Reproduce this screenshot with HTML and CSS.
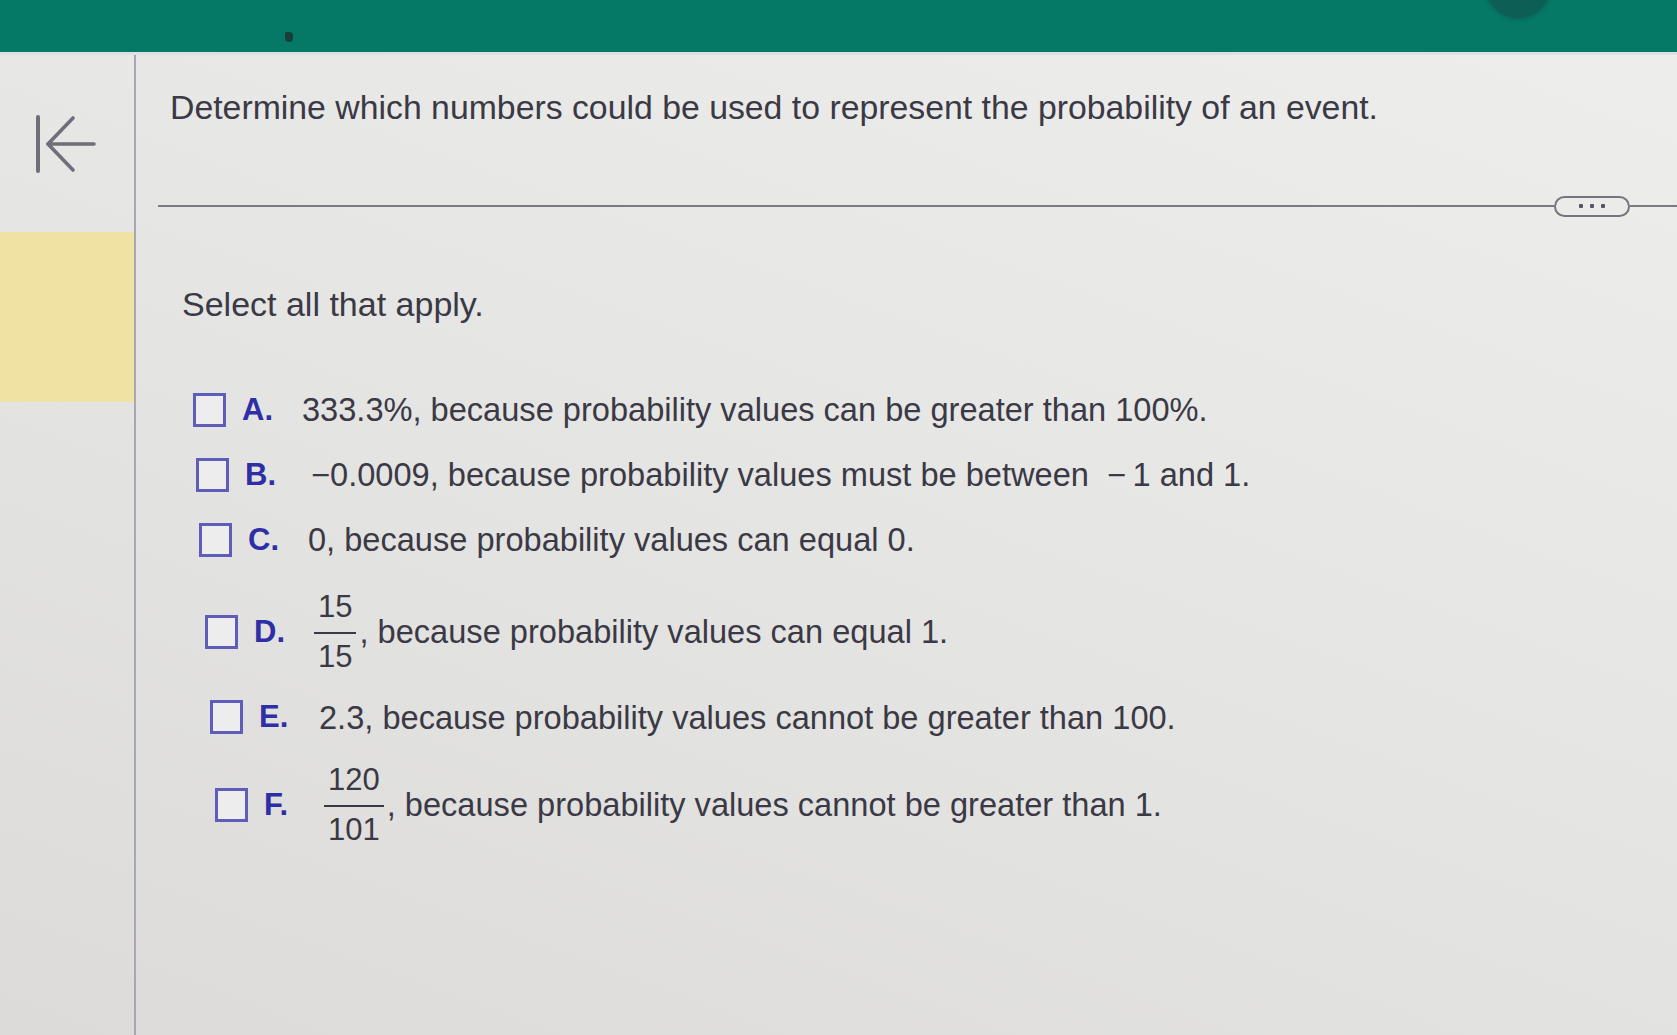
FILE: index.html
```html
<!DOCTYPE html>
<html lang="en">
<head>
<meta charset="utf-8">
<title>Probability question</title>
<link rel="stylesheet" href="styles.css">
</head>
<body>
<header class="topbar">
  <span class="avatar"></span>
  <span class="speck"></span>
</header>
<div class="layout">
  <aside class="sidebar">
    <button class="back" aria-label="Back">
      <svg width="62" height="60" viewBox="0 0 62 60">
        <line x1="3" y1="2" x2="3" y2="56" stroke="#6f6e79" stroke-width="4" stroke-linecap="round"/>
        <line x1="13" y1="29" x2="59" y2="29" stroke="#6f6e79" stroke-width="3.6" stroke-linecap="round"/>
        <polyline points="38,3 13,29 38,55" fill="none" stroke="#6f6e79" stroke-width="3.6" stroke-linecap="round" stroke-linejoin="round"/>
      </svg>
    </button>
    <div class="flag"></div>
  </aside>
  <main class="content">
    <h1 class="question">Determine which numbers could be used to represent the probability of an event.</h1>
    <div class="divider">
      <span class="line"></span>
      <span class="more"><i></i><i></i><i></i></span>
      <span class="line tail"></span>
    </div>
    <p class="instruction">Select all that apply.</p>
    <ul class="options">
      <li class="option"><span class="box"></span><span class="letter">A.</span><span class="text">333.3%, because probability values can be greater than 100%.</span></li>
      <li class="option"><span class="box"></span><span class="letter">B.</span><span class="text neg">−0.0009, because probability values must be between &nbsp;−&#8201;1 and 1.</span></li>
      <li class="option"><span class="box"></span><span class="letter">C.</span><span class="text">0, because probability values can equal 0.</span></li>
      <li class="option"><span class="box"></span><span class="letter">D.</span><span class="frac"><span class="num">15</span><span class="den">15</span></span><span class="text">, because probability values can equal 1.</span></li>
      <li class="option"><span class="box"></span><span class="letter">E.</span><span class="text">2.3, because probability values cannot be greater than 100.</span></li>
      <li class="option"><span class="box"></span><span class="letter">F.</span><span class="frac"><span class="num">120</span><span class="den">101</span></span><span class="text">, because probability values cannot be greater than 1.</span></li>
    </ul>
  </main>
</div>
</body>
</html>
```

FILE: styles.css
```css
* { box-sizing: border-box; }

html, body {
  margin: 0;
  height: 100%;
}

body {
  display: flex;
  flex-direction: column;
  font-family: "Liberation Sans", Arial, sans-serif;
  color: #3a3945;
  background: linear-gradient(200deg, #eeeeec 0%, #e6e6e4 45%, #dcdbd9 100%);
  overflow: hidden;
}

.topbar {
  position: relative;
  height: 55px;
  flex: none;
  background: #067866;
  border-bottom: 3px solid #dde1e4;
}

.avatar {
  position: absolute;
  left: 1486px;
  top: -46px;
  width: 64px;
  height: 64px;
  border-radius: 50%;
  background: #0d5f56;
  box-shadow: 0 0 4px 1px #0d5f56;
}

.speck {
  position: absolute;
  left: 285px;
  top: 32px;
  width: 8px;
  height: 10px;
  border-radius: 2px 5px 5px 5px;
  background: #173f38;
}

.layout {
  flex: 1;
  display: flex;
  min-height: 0;
}

.sidebar {
  width: 136px;
  flex: none;
  border-right: 2px solid #a8a8b0;
  padding-top: 60px;
}

.back {
  display: block;
  margin: 0 0 0 35px;
  padding: 0;
  border: 0;
  background: none;
  width: 62px;
  height: 60px;
}

.back svg { display: block; }

.flag {
  margin-top: 57px;
  height: 170px;
  background: #f0e2a3;
}

.content {
  flex: 1;
  padding: 33px 0 0 22px;
  min-width: 0;
}

.question {
  margin: 0 0 0 12px;
  font-size: 33.8px;
  font-weight: normal;
  line-height: 1.15;
  white-space: nowrap;
}

.divider {
  display: flex;
  align-items: center;
  height: 21px;
  margin-top: 69px;
}

.line {
  flex: 1;
  height: 2px;
  background: #7a7a84;
}

.line.tail {
  flex: none;
  width: 47px;
}

.more {
  width: 76px;
  height: 21px;
  border: 2px solid #75757f;
  border-radius: 11px;
  background: #ebebe9;
  display: flex;
  align-items: center;
  justify-content: center;
  gap: 7px;
}

.more i {
  width: 4px;
  height: 4px;
  border-radius: 1px;
  background: #55555f;
}

.instruction {
  margin: 68px 0 0 24px;
  font-size: 34px;
  line-height: 1.15;
}

.options {
  list-style: none;
  margin: 66px 0 0 35px;
  padding: 0;
  display: flex;
  flex-direction: column;
  gap: 25px;
}

.option {
  display: flex;
  align-items: center;
  min-height: 40px;
}

.option:nth-child(2) { margin-left: 3px; }
.option:nth-child(3) { margin-left: 6px; }
.option:nth-child(4) { margin-left: 12px; margin-top: 4px; }
.option:nth-child(5) { margin-left: 17px; margin-top: -2px; }
.option:nth-child(6) { margin-left: 22px; }

.box {
  flex: none;
  width: 33px;
  height: 34px;
  border: 3px solid #5e5eba;
  background: #ededee;
  margin-right: 16px;
}

.letter {
  flex: none;
  width: 60px;
  font-size: 31px;
  font-weight: bold;
  color: #2e2ea6;
  line-height: 1.15;
}

.text {
  font-size: 32.6px;
  line-height: 1.15;
  white-space: nowrap;
}

.text.neg { padding-left: 6px; }

.frac {
  display: inline-flex;
  flex-direction: column;
  align-items: stretch;
  font-size: 31px;
  line-height: 1.15;
  text-align: center;
  margin-right: 3px;
}

.num {
  padding: 0 4px 7px;
  border-bottom: 2px solid #3a3945;
}

.den {
  padding: 5px 4px 0;
}
```
